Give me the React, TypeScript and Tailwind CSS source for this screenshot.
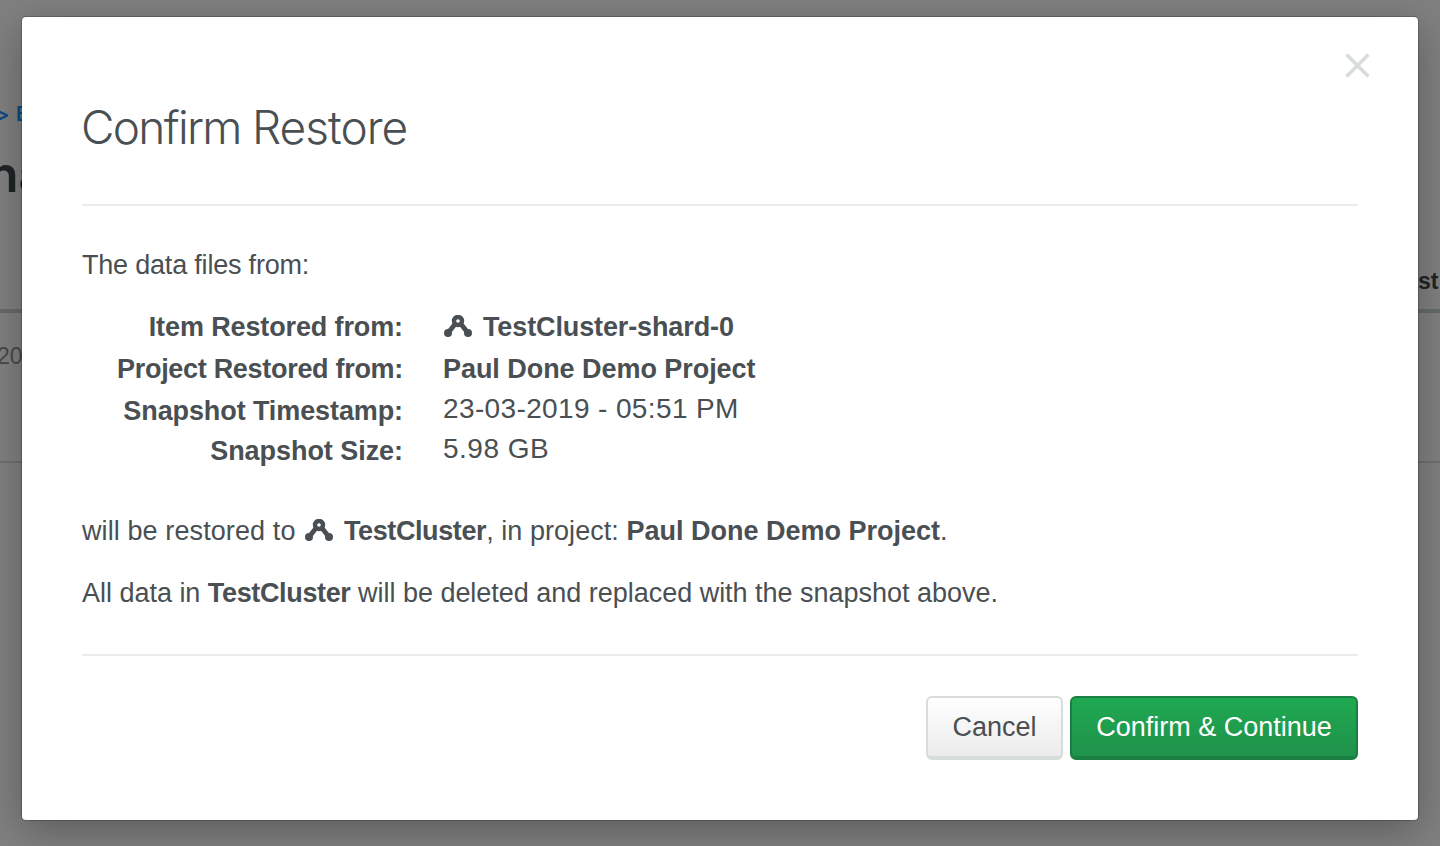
import React from 'react';

function ClusterIcon({ className }: { className: string }) {
  return (
    <svg viewBox="0 0 28 22" className={`h-[22px] w-[28px] shrink-0 ${className}`} fill="none" stroke="currentColor">
      <path d="M11.500 8.500 4 18M16.500 8.500 24 18" strokeWidth="4.800" />
      <circle cx="14" cy="6" r="4" strokeWidth="4.400" />
      <circle cx="4" cy="18" r="4" fill="currentColor" stroke="none" />
      <circle cx="24" cy="18" r="4" fill="currentColor" stroke="none" />
    </svg>
  );
}

function PageBehind() {
  return (
    <div className="h-full w-full overflow-hidden bg-[#808080] whitespace-nowrap text-[#202426]">
      <div className="flex h-[144px] items-end pb-[17px] text-[20px] leading-[26px] font-semibold text-[#0b4a80]">
        <span className="-ml-[4px] w-[20px]">&gt;</span>
        <span>B</span>
      </div>
      <div className="-ml-[12px] h-[115px] pt-px text-[50px] leading-[58px] font-semibold">na</div>
      <div className="flex h-[54px] justify-end border-b-4 border-[#676b6a] pt-[8px] text-[23px] leading-[28px] font-bold">
        <span className="w-[22px] font-['Liberation_Sans',sans-serif]">st</span>
      </div>
      <div className="h-[150px] border-b-2 border-[#707070] pt-[29px] text-[23px] leading-[28px] text-[#494949]">
        <div className="-ml-[3px] font-['Liberation_Sans',sans-serif]">20</div>
      </div>
    </div>
  );
}

function Row({
  label,
  children,
  className,
  labelClass,
}: {
  label: string;
  children: React.ReactNode;
  className: string;
  labelClass: string;
}) {
  return (
    <div className={`flex ${className}`}>
      <dt className={`mr-[40px] flex w-[321px] justify-end font-bold ${labelClass}`}>{label}</dt>
      <dd className="flex">{children}</dd>
    </div>
  );
}

export default function App() {
  return (
    <div className="relative h-[846px] w-[1440px] overflow-hidden font-['Inter',sans-serif]">
      <PageBehind />
      <div className="absolute inset-0 flex justify-center pt-[17px]">
        <section
          role="dialog"
          className="flex h-[803px] w-[1396px] flex-col rounded-[4px] bg-white px-[60px] font-['Liberation_Sans',sans-serif] whitespace-nowrap text-[#494f52] shadow-[0_0_0_1px_rgba(0,0,0,0.2),0_10px_40px_rgba(0,0,0,0.3)]"
        >
          <div className="flex h-[83px] justify-end pt-[36px]">
            <button aria-label="Close" className="-mr-[12px] h-[25px] w-[25px] text-[#d8dcdb]">
              <svg viewBox="0 0 25 25" className="h-[25px] w-[25px]" stroke="currentColor" strokeWidth="3.600">
                <path d="M1.500 1.500l22 22M23.500 1.500l-22 22" />
              </svg>
            </button>
          </div>
          <h1 className="-ml-px h-[106px] border-b-2 border-transparent font-['Inter',sans-serif] text-[46px] leading-[54px] font-light">
            <span className="tracking-[-1.7px]">Confirm </span>
            <span className="tracking-[-0.95px]">Restore</span>
          </h1>
          <div className="-mt-[2px] h-[452px] border-y-2 border-[#ebebeb] pt-[41px] text-[27px] leading-[36px]">
            <p className="tracking-[-0.2px]">The data files from:</p>
            <dl className="mt-[26px]">
              <Row label="Item Restored from:" className="h-[42px]" labelClass="tracking-[-0.12px]">
                <ClusterIcon className="mt-[6px] mr-[11px] ml-[1px]" />
                <span className="font-bold tracking-[-0.12px]">TestCluster-shard-0</span>
              </Row>
              <Row label="Project Restored from:" className="h-[42px]" labelClass="tracking-[-0.3px]">
                <span className="font-bold tracking-[-0.05px]">Paul Done Demo Project</span>
              </Row>
              <Row label="Snapshot Timestamp:" className="h-[40px]" labelClass="tracking-[-0.1px]">
                <span className="-mt-[2px] text-[28px] tracking-[0.37px]">23-03-2019 - 05:51 PM</span>
              </Row>
              <Row label="Snapshot Size:" className="h-[40px]" labelClass="tracking-[-0.05px]">
                <span className="-mt-[2px] text-[28px] tracking-[0.5px]">5.98 GB</span>
              </Row>
            </dl>
            <p className="mt-[40px] flex">
              <span className="w-[223px] tracking-[0.1px]">will be restored to</span>
              <ClusterIcon className="mt-[6px] mr-[11px]" />
              <b className="tracking-[-0.4px]">TestCluster</b>
              <span className="whitespace-pre tracking-[0.05px]">, in project: </span>
              <b>Paul Done Demo Project</b>
              <span>.</span>
            </p>
            <p className="mt-[26px] tracking-[-0.02px]">
              All data in <b className="tracking-[-0.35px]">TestCluster</b> will be deleted and replaced with the
              snapshot above.
            </p>
          </div>
          <div className="mt-[40px] flex justify-end gap-[7px] text-[27px]">
            <button className="h-[64px] w-[137px] rounded-[6px] border-2 border-b-4 border-[#d7dbda] bg-linear-to-b from-white to-[#ebebeb]">
              Cancel
            </button>
            <button className="h-[64px] w-[288px] rounded-[6px] border-2 border-b-4 border-[#1a7f43] bg-linear-to-b from-[#1ea951] to-[#20924b] text-white">
              Confirm &amp; Continue
            </button>
          </div>
        </section>
      </div>
    </div>
  );
}
